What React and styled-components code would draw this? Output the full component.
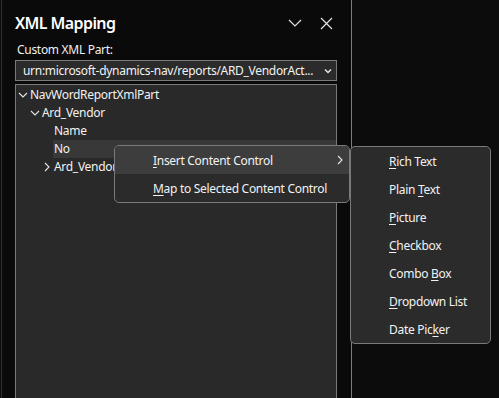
import React from 'react'
import styled, {createGlobalStyle} from 'styled-components'

const Global = createGlobalStyle`
  html, body {
    margin: 0;
    background: #0b0b0b;
    font-family: "Noto Sans", "Open Sans", sans-serif;
    color: #f2f2f2;
    overflow: hidden;
  }
`

const subItems = [
  {pre: '', key: 'R', post: 'ich Text'},
  {pre: 'Plain ', key: 'T', post: 'ext'},
  {pre: '', key: 'P', post: 'icture'},
  {pre: '', key: 'C', post: 'heckbox'},
  {pre: 'Combo ', key: 'B', post: 'ox'},
  {pre: '', key: 'D', post: 'ropdown List'},
  {pre: 'Date Pic', key: 'k', post: 'er'},
]

const tree = [
  {level: 0, icon: 'down', label: 'NavWordReportXmlPart'},
  {level: 1, icon: 'down', label: 'Ard_Vendor'},
  {level: 2, label: 'Name'},
  {level: 2, label: 'No', selected: true},
  {level: 2, icon: 'right', label: 'Ard_Vendor'},
]

function Chevron({dir, size = 10}) {
  const d = dir === 'down' ? 'M1 3 L5 7 L9 3' : 'M3 1 L7 5 L3 9'
  return (
    <svg width={size} height={size} viewBox="0 0 10 10">
      <path d={d} fill="none" stroke="#e6e6e6" strokeWidth="1.1" />
    </svg>
  )
}

function App() {
  return (
    <Page>
      <Global />
      <Pane>
        <Header>
          <Title>XML Mapping</Title>
          <HeaderIcons>
            <svg width="14" height="14" viewBox="0 0 14 14">
              <path d="M1 4 L7 10 L13 4" fill="none" stroke="#e0e0e0" strokeWidth="1.2" />
            </svg>
            <svg width="13" height="13" viewBox="0 0 13 13">
              <path d="M1 1 L12 12 M12 1 L1 12" fill="none" stroke="#e0e0e0" strokeWidth="1.2" />
            </svg>
          </HeaderIcons>
        </Header>
        <Label>Custom XML Part:</Label>
        <Select>
          <SelectText>urn:microsoft-dynamics-nav/reports/ARD_VendorAct...</SelectText>
          <svg width="8" height="6" viewBox="0 0 8 6">
            <path d="M1 1.5 L4 4.5 L7 1.5" fill="none" stroke="#e6e6e6" strokeWidth="1.5" />
          </svg>
        </Select>
        <Tree>
          {tree.map((n, i) => (
            <Row key={i} level={n.level}>
              <Twisty>{n.icon && <Chevron dir={n.icon} />}</Twisty>
              <NodeLabel selected={n.selected}>{n.label}</NodeLabel>
            </Row>
          ))}
        </Tree>
      </Pane>

      <Menu style={{left: 114, top: 145, width: 234}}>
        <MenuItem active>
          <span><u>I</u>nsert Content Control</span>
          <Arrow><Chevron dir="right" size={10} /></Arrow>
        </MenuItem>
        <MenuItem>
          <span><u>M</u>ap to Selected Content Control</span>
        </MenuItem>
      </Menu>

      <Menu style={{left: 350, top: 146, width: 139}}>
        {subItems.map((s, i) => (
          <MenuItem key={i}>
            <span>{s.pre}<u>{s.key}</u>{s.post}</span>
          </MenuItem>
        ))}
      </Menu>
    </Page>
  )
}

export default App

const Page = styled.div`
  position: relative;
  display: flex;
  width: 499px;
  height: 398px;
  background: #0c0c0c;
  letter-spacing: -0.3px;
`

const Pane = styled.div`
  width: 351px;
  height: 100%;
  box-sizing: border-box;
  background: #0a0a0a;
  border-left: 1px solid #2e2e2e;
  border-right: 1px solid #7c7c7c;
  margin-left: 1px;
  padding: 0 14px 0 13px;
  display: flex;
  flex-direction: column;
`

const Header = styled.div`
  height: 46px;
  display: flex;
  align-items: center;
  justify-content: space-between;
`

const Title = styled.div`
  font-size: 16px;
  font-weight: 600;
  letter-spacing: -0.6px;
  color: #ffffff;
`

const HeaderIcons = styled.div`
  display: flex;
  align-items: center;
  gap: 18px;
  padding-right: 4px;
`

const Label = styled.div`
  font-size: 12px;
  line-height: 14px;
  margin-top: -3px;
  padding-left: 2px;
  color: #f0f0f0;
`

const Select = styled.div`
  margin-top: 3px;
  height: 21px;
  box-sizing: border-box;
  border: 1px solid #7a7a7a;
  background: #2b2b2b;
  display: flex;
  align-items: center;
  justify-content: space-between;
  padding: 0 4px 0 7px;
  font-size: 12px;
  color: #f2f2f2;
`

const SelectText = styled.span`
  white-space: nowrap;
  overflow: hidden;
`

const Tree = styled.div`
  margin-top: 3px;
  flex: 1;
  border: 1px solid #7a7a7a;
  border-bottom: none;
  background: #292929;
  padding-top: 1px;
`

const Row = styled.div`
  height: 18px;
  display: flex;
  align-items: center;
  padding-left: ${p => 2 + p.level * 12}px;
  font-size: 12px;
`

const Twisty = styled.div`
  width: 12px;
  height: 18px;
  display: flex;
  align-items: center;
  justify-content: flex-start;
`

const NodeLabel = styled.div`
  flex: 1;
  height: 18px;
  line-height: 18px;
  padding-left: 1px;
  margin-left: -1px;
  white-space: nowrap;
  background: ${p => (p.selected ? '#383838' : 'transparent')};
`

const Menu = styled.div`
  position: absolute;
  box-sizing: content-box;
  background: #2b2b2b;
  border: 1px solid #7a7a7a;
  border-radius: 5px;
  overflow: hidden;
  display: flex;
  flex-direction: column;
`

const MenuItem = styled.div`
  height: 28px;
  display: flex;
  align-items: center;
  justify-content: space-between;
  padding: 0 4px 0 38px;
  font-size: 12px;
  color: #f2f2f2;
  background: ${p => (p.active ? '#3d3d3d' : 'transparent')};

  u {
    text-underline-offset: 2px;
  }
`

const Arrow = styled.span`
  display: flex;
  align-items: center;
`
